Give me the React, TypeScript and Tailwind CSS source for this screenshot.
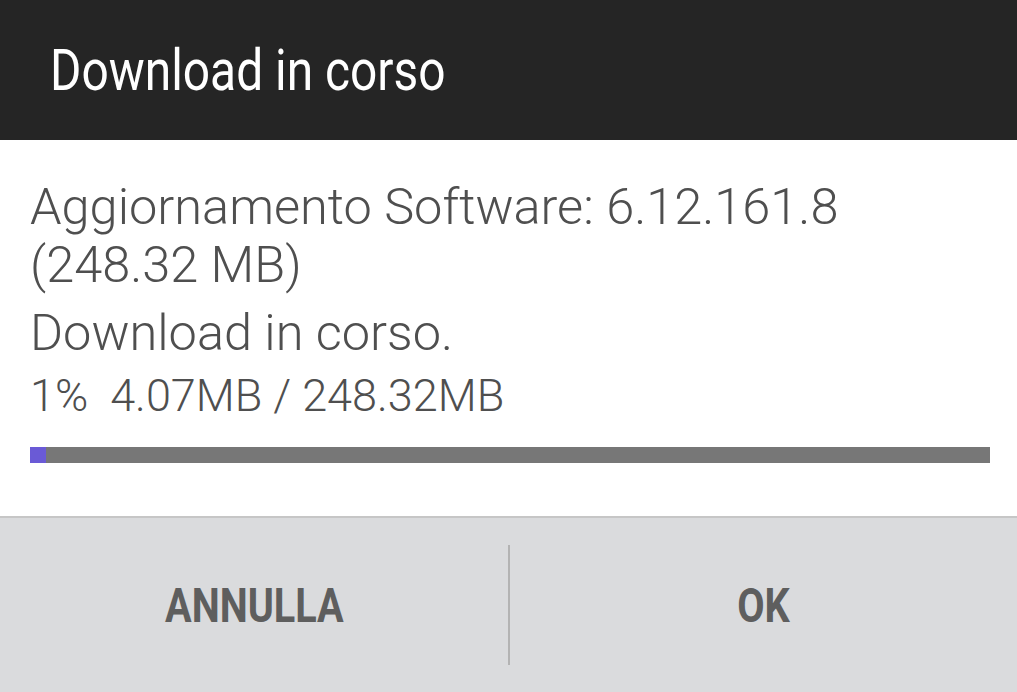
export default function App() {
  return (
    <div className="w-[1017px] h-[692px] flex flex-col bg-white font-['Roboto',sans-serif] overflow-hidden">
      <div className="h-[140px] shrink-0 bg-[#252525] flex items-center pl-[50px]">
        <span className="inline-block origin-left scale-x-[0.84] text-white text-[57px] leading-none font-normal whitespace-nowrap">
          Download in corso
        </span>
      </div>
      <div className="flex-1 flex flex-col pl-[30px] pr-[28px] pt-[38px] text-[#4f4f4f]">
        <p className="text-[50.5px] leading-[58px] font-light">
          Aggiornamento Software: 6.12.161.8
          <br />
          (248.32 MB)
        </p>
        <p className="mt-[10px] text-[50.5px] leading-[58px] font-light">Download in corso.</p>
        <p className="mt-[9px] text-[45px] leading-[50px] font-light whitespace-pre">1%  4.07MB / 248.32MB</p>
        <div className="mt-[26px] h-[16px] w-[960px] bg-[#777777] flex">
          <div className="w-[16px] h-full bg-[#6a5ad6]" />
        </div>
      </div>
      <div className="h-[176px] shrink-0 border-t-2 border-[#c6c6c6] bg-[#dadbdd] flex items-center">
        <div className="w-[508px] h-full flex items-center justify-center">
          <span className="inline-block scale-x-[0.81] text-[49px] leading-none font-bold text-[#5e5e5e]">ANNULLA</span>
        </div>
        <div className="w-[2px] h-[120px] bg-[#b3b3b3]" />
        <div className="flex-1 h-full flex items-center justify-center">
          <span className="inline-block scale-x-[0.81] text-[49px] leading-none font-bold text-[#5e5e5e]">OK</span>
        </div>
      </div>
    </div>
  );
}
